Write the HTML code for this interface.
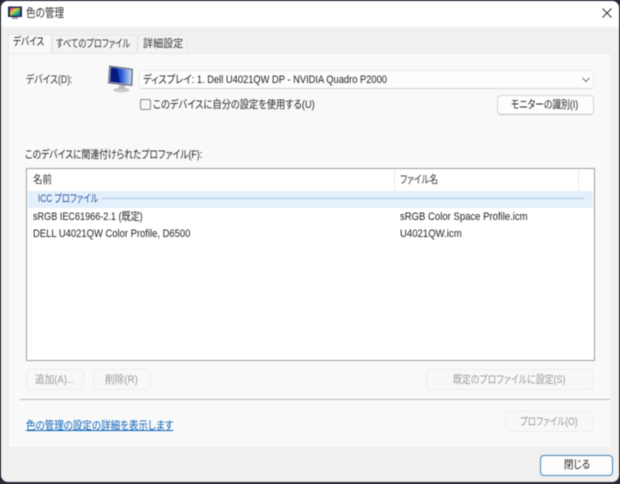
<!DOCTYPE html>
<html lang="ja"><head><meta charset="utf-8">
<style>
html,body{margin:0;padding:0;width:620px;height:484px;overflow:hidden;background:#262a38}
*{box-sizing:border-box}
body{position:relative;font-family:"Liberation Sans","Noto Sans CJK JP",sans-serif;font-size:11px;color:#222;font-feature-settings:"palt"}
#all{position:absolute;left:0;top:0;width:620px;height:484px;filter:blur(.4px)}
.a{position:absolute;white-space:nowrap;line-height:14px;transform-origin:0 50%}
#win{position:absolute;left:1px;top:1px;width:618px;height:481px;background:#f0f0f0;border-radius:7px;overflow:hidden}
#title{position:absolute;left:0;top:0;width:618px;height:26px;background:#fff}
#page{position:absolute;left:7px;top:52px;width:604px;height:395px;background:#f9f9f9;border:1px solid #ececec}
.tab{position:absolute;background:#f4f4f4;border:1px solid #e8e8e8;border-bottom:none}
.btn{position:absolute;background:#fdfdfd;border:1px solid #d4d4d4;border-bottom-color:#bcbcbc;border-radius:4px}
.dis{background:#f8f8f8;border:1px solid #ededed}
.g{color:#9a9a9a}
</style></head><body>
<div id="all">
<div id="win">
<div id="title"></div>
<div id="page"></div>
</div>

<svg class="a" style="left:8px;top:6px" width="14" height="14" viewBox="0 0 14 14"><defs><linearGradient id="g" x1="0" y1="0" x2="1" y2="1"><stop offset="0" stop-color="#d02a90"/><stop offset=".4" stop-color="#e8c840"/><stop offset=".65" stop-color="#30c070"/><stop offset="1" stop-color="#2050d0"/></linearGradient></defs><rect x="0" y="0.5" width="14" height="10.5" fill="#1f2a50"/><rect x="2" y="2" width="10" height="7.5" fill="url(#g)"/><rect x="4" y="11" width="6" height="2" fill="#9aa0aa"/></svg>
<div class="a" style="left:26px;top:6px;font-size:12px;color:#333;transform:scaleX(.8)">色の管理</div>
<svg class="a" style="left:602px;top:8px" width="10" height="10" viewBox="0 0 10 10"><path d="M.5 .5L9.5 9.5M9.5 .5L.5 9.5" stroke="#333" stroke-width="1" fill="none"/></svg>

<div class="tab" style="left:8px;top:34px;width:44px;height:19px;background:#f9f9f9;border-color:#e6e6e6;z-index:2"></div>
<div class="tab" style="left:52px;top:35px;width:85px;height:17px"></div>
<div class="tab" style="left:138px;top:35px;width:49px;height:17px"></div>
<div class="a" style="left:13px;top:35px;z-index:3;transform:scaleX(.78)">デバイス</div>
<div class="a" style="left:56px;top:37px;color:#333;transform:scaleX(.745)">すべてのプロファイル</div>
<div class="a" style="left:143px;top:37px;color:#333;transform:scaleX(.917)">詳細設定</div>

<div class="a" style="left:26px;top:73px;color:#333;transform:scaleX(.8)">デバイス(D):</div>

<svg class="a" style="left:108px;top:65px" width="26" height="28" viewBox="0 0 26 28"><defs><linearGradient id="m" x1="0" y1="0" x2="1" y2="0"><stop offset="0" stop-color="#0a28a8"/><stop offset=".5" stop-color="#1c4fd0"/><stop offset="1" stop-color="#c4d6f6"/></linearGradient></defs><ellipse cx="13.5" cy="25" rx="8" ry="2.5" fill="#c8cacc"/><rect x="11" y="20" width="6" height="4" fill="#b8babc"/><path d="M1.5 1L24.5 4 24 20.5 .5 18Z" fill="#9aa2b0" stroke="#4a5468" stroke-width=".7"/><path d="M3 2.5L23 5.2 22.6 19 2.2 16.8Z" fill="url(#m)"/><path d="M3 2.5L9 3.3 12 17.8 2.2 16.8Z" fill="#061a80"/></svg>

<div class="a" style="left:139px;top:70px;width:455px;height:19px;background:#fdfdfd;border:1px solid #ececec;border-bottom-color:#d4d4d4;border-radius:3px"></div>
<div class="a" style="left:143px;top:73px;transform:scaleX(.848)">ディスプレイ: 1. Dell U4021QW DP - NVIDIA Quadro P2000</div>
<svg class="a" style="left:582px;top:77px" width="8" height="6" viewBox="0 0 8 6"><path d="M.5 1L4 4.5 7.5 1" stroke="#777" stroke-width="1" fill="none"/></svg>

<div class="a" style="left:140px;top:99px;width:11px;height:11px;background:#f6f6f6;border:1px solid #888;border-radius:2px"></div>
<div class="a" style="left:153px;top:98px;transform:scaleX(.84)">このデバイスに自分の設定を使用する(U)</div>

<div class="btn" style="left:497px;top:95px;width:97px;height:20px"></div>
<div class="a" style="left:511px;top:98px;transform:scaleX(.8)">モニターの識別(I)</div>

<div class="a" style="left:25px;top:148px;transform:scaleX(.8)">このデバイスに関連付けられたプロファイル(F):</div>

<div class="a" style="left:26px;top:168px;width:569px;height:193px;background:#fff;border:1px solid #a0a0a0"></div>
<div class="a" style="left:394px;top:170px;width:1px;height:21px;background:#e8e8e8"></div>
<div class="a" style="left:578px;top:170px;width:1px;height:21px;background:#e8e8e8"></div>
<div class="a" style="left:33px;top:173px;color:#333;transform:scaleX(.86)">名前</div>
<div class="a" style="left:400px;top:173px;color:#333;transform:scaleX(.773)">ファイル名</div>

<div class="a" style="left:28px;top:191px;width:565px;height:17px;background:#e3f0fb"></div>
<div class="a" style="left:38px;top:192px;color:#2a4fa0;transform:scaleX(.745)">ICC プロファイル</div>
<div class="a" style="left:102px;top:198px;width:482px;height:1px;background:#a9c2e0"></div>

<div class="a" style="left:33px;top:210px;transform:scaleX(.827)">sRGB IEC61966-2.1 (既定)</div>
<div class="a" style="left:400px;top:210px;transform:scaleX(.866)">sRGB Color Space Profile.icm</div>
<div class="a" style="left:33px;top:227px;transform:scaleX(.857)">DELL U4021QW Color Profile, D6500</div>
<div class="a" style="left:400px;top:227px;transform:scaleX(.87)">U4021QW.icm</div>

<div class="btn dis" style="left:26px;top:369px;width:58px;height:21px"></div>
<div class="a g" style="left:35px;top:373px;transform:scaleX(.87)">追加(A)...</div>
<div class="btn dis" style="left:93px;top:369px;width:58px;height:21px"></div>
<div class="a g" style="left:105px;top:373px;transform:scaleX(.88)">削除(R)</div>
<div class="btn dis" style="left:426px;top:369px;width:167px;height:21px"></div>
<div class="a g" style="left:453px;top:373px;transform:scaleX(.81)">既定のプロファイルに設定(S)</div>

<div class="a" style="left:20px;top:399px;width:590px;height:1px;background:#bcbcbc"></div>

<div class="a" style="left:26px;top:419px;color:#0a62b8;text-decoration:underline;transform:scaleX(.865)">色の管理の設定の詳細を表示します</div>
<div class="btn dis" style="left:505px;top:411px;width:88px;height:21px"></div>
<div class="a g" style="left:520px;top:415px;transform:scaleX(.77)">プロファイル(O)</div>

<div class="btn" style="left:540px;top:455px;width:73px;height:21px;border:1.5px solid #3f85bd;border-radius:4px;background:#fdfdfd"></div>
<div class="a" style="left:564px;top:458px;transform:scaleX(.86)">閉じる</div>
</div>
</body></html>
